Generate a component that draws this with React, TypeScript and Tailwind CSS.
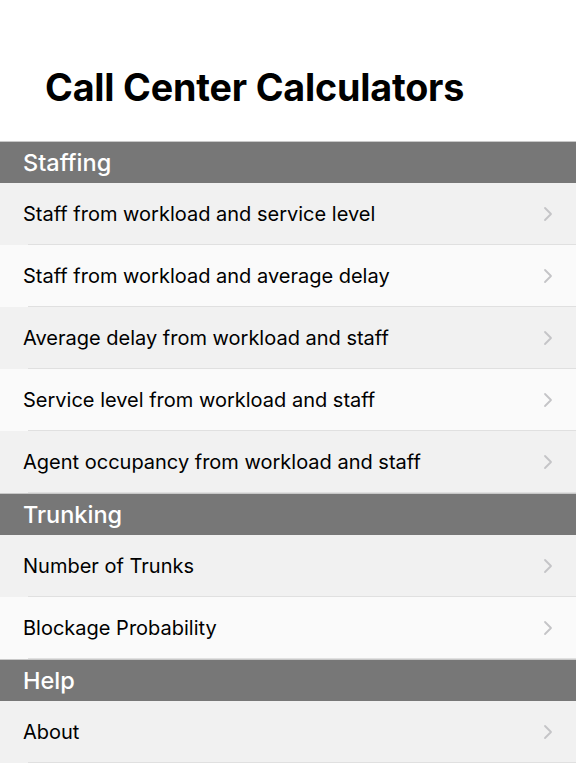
import { ChevronRight } from "lucide-react";

const sections = [
  {
    title: "Staffing",
    items: [
      "Staff from workload and service level",
      "Staff from workload and average delay",
      "Average delay from workload and staff",
      "Service level from workload and staff",
      "Agent occupancy from workload and staff",
    ],
  },
  { title: "Trunking", items: ["Number of Trunks", "Blockage Probability"] },
  { title: "Help", items: ["About"] },
];

function Row({ label, shaded }: { label: string; shaded: boolean }) {
  return (
    <div className={`relative flex h-[62px] items-center justify-between pl-[23px] pr-[16px] ${shaded ? "bg-[#f1f1f1]" : "bg-[#fafafa]"}`}>
      <span className="text-[20px] text-black">{label}</span>
      <ChevronRight className="h-[24px] w-[24px] text-[#c4c4c7]" strokeWidth={1.8} />
      <div className="absolute bottom-0 left-[28px] right-0 h-px bg-[#e0e0e0]" />
    </div>
  );
}

export default function App() {
  return (
    <div className="min-h-[768px] bg-white font-['Inter','Liberation_Sans',sans-serif]">
      <div className="h-[141px] pl-[45px] pt-[63px]">
        <h1 className="text-[37.7px] font-bold leading-[48px] tracking-[-0.2px] text-black">Call Center Calculators</h1>
      </div>
      {sections.map((s) => (
        <div key={s.title}>
          <div className="flex h-[42px] items-center border-t border-[#c8c8c8] bg-[#777777] pl-[23px] text-[23.5px] font-medium text-white">
            {s.title}
          </div>
          {s.items.map((it, i) => (
            <Row key={it} label={it} shaded={i % 2 === 0} />
          ))}
        </div>
      ))}
    </div>
  );
}
